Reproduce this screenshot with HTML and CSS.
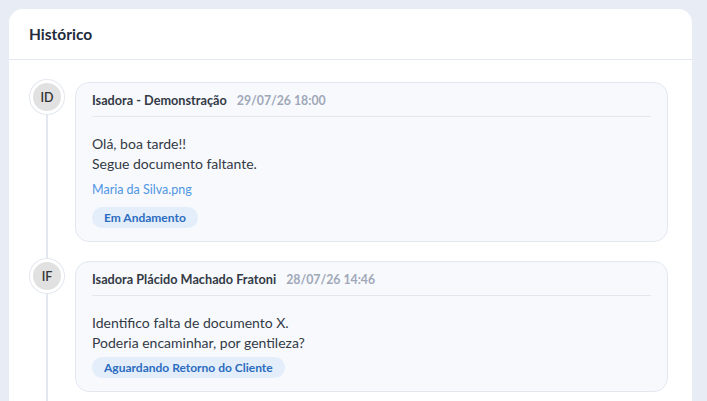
FILE: index.html
```html
<!DOCTYPE html>
<html lang="pt-BR">
<head>
  <meta charset="UTF-8">
  <title>Histórico</title>
  <link rel="stylesheet" href="styles.css">
</head>
<body>
  <div class="panel">
    <div class="panel-header">
      <h2>Histórico</h2>
    </div>
    <div class="timeline">
      <!-- item 1 -->
      <div class="item">
        <div class="rail">
          <div class="avatar">ID</div>
          <div class="line"></div>
        </div>
        <div class="entry">
          <div class="entry-head">
            <span class="author">Isadora - Demonstração</span>
            <span class="date">29/07/26 18:00</span>
          </div>
          <div class="entry-body">
            <p>Olá, boa tarde!!<br>Segue documento faltante.</p>
            <a href="#" class="attachment">Maria da Silva.png</a>
            <span class="badge">Em Andamento</span>
          </div>
        </div>
      </div>
      <!-- item 2 -->
      <div class="item">
        <div class="rail">
          <div class="avatar">IF</div>
          <div class="line"></div>
        </div>
        <div class="entry">
          <div class="entry-head">
            <span class="author">Isadora Plácido Machado Fratoni</span>
            <span class="date">28/07/26 14:46</span>
          </div>
          <div class="entry-body">
            <p>Identifico falta de documento X.<br>Poderia encaminhar, por gentileza?</p>
            <span class="badge">Aguardando Retorno do Cliente</span>
          </div>
        </div>
      </div>
    </div>
  </div>
</body>
</html>
```

FILE: styles.css
```css
:root {
  --page-bg: #e8ecf5;
  --panel-bg: #ffffff;
  --entry-bg: #f7f9fd;
  --border: #e3e8f0;
  --title: #1f2b3d;
  --text: #333a45;
  --muted: #a0a8b8;
  --link: #5096e4;
  --badge-bg: #e3eefa;
  --badge-text: #2b6cc0;
  --font-family: 'Lato', 'Noto Sans', sans-serif;
}
* {
  box-sizing: border-box;
  margin: 0;
  padding: 0;
}
body {
  font-family: var(--font-family);
  background: var(--page-bg);
  padding: 9px 15px 0 9px;
  height: 401px;
  overflow: hidden;
}
.panel {
  background: var(--panel-bg);
  border-radius: 14px 14px 0 0;
  min-height: 400px;
}
.panel-header {
  height: 51px;
  padding: 0 20px;
  display: flex;
  align-items: center;
  border-bottom: 1px solid var(--border);
}
h2 {
  font-size: 15.5px;
  font-weight: 700;
  color: var(--title);
}
.timeline {
  padding: 22px 24px 0 21px;
}
.item {
  display: flex;
  gap: 11px;
}
.rail {
  display: flex;
  flex-direction: column;
  align-items: center;
  width: 34px;
  flex-shrink: 0;
}
.avatar {
  width: 34px;
  height: 34px;
  border-radius: 50%;
  background: #e1e1e1;
  border: 3px solid #ffffff;
  box-shadow: 0 0 0 1px var(--border);
  display: flex;
  align-items: center;
  justify-content: center;
  font-size: 12.5px;
  font-weight: 600;
  color: #333;
  margin-top: -2px;
}
.line {
  flex: 1;
  width: 2px;
  background: var(--border);
}
.entry {
  flex: 1;
  background: var(--entry-bg);
  border: 1px solid var(--border);
  border-radius: 14px;
  padding: 0 16px 13px;
  margin-bottom: 19px;
}
.entry-head {
  height: 34px;
  padding-top: 1px;
  display: flex;
  align-items: center;
  gap: 10px;
  border-bottom: 1px solid var(--border);
  font-weight: 700;
}
.author {
  font-size: 12.7px;
  color: var(--text);
}
.date {
  font-size: 12.3px;
  color: var(--muted);
}
.entry-body {
  padding-top: 17px;
  font-size: 14px;
  line-height: 20px;
  color: var(--text);
}
.attachment {
  display: block;
  margin-top: 7px;
  line-height: 18px;
  font-size: 12.5px;
  color: var(--link);
  text-decoration: none;
}
.badge {
  display: inline-block;
  vertical-align: top;
  margin-top: 8px;
  padding: 0 12px;
  height: 21px;
  line-height: 21px;
  border-radius: 11px;
  background: var(--badge-bg);
  color: var(--badge-text);
  font-size: 12px;
  font-weight: 700;
}
p + .badge {
  margin-top: 4px;
}
```
